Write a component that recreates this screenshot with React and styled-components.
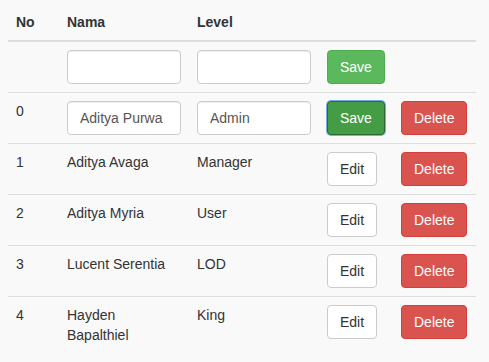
import React from "react";
import styled, { createGlobalStyle, css } from "styled-components";

const Global = createGlobalStyle`
  html, body { margin: 0; padding: 0; background: #f9f9f9; }
  body {
    font-family: "Liberation Sans", Arial, Helvetica, sans-serif;
    font-size: 14px;
    line-height: 1.42857143;
    color: #333;
  }
  * { box-sizing: border-box; }
`;

const Wrap = styled.div`
  padding: 4px 13px 0 8px;
`;

const Table = styled.table`
  width: 468px;
  table-layout: fixed;
  border-collapse: collapse;
  border-spacing: 0;
`;

const Th = styled.th`
  text-align: left;
  font-weight: bold;
  padding: 8px;
  vertical-align: bottom;
  border-bottom: 2px solid #ddd;
  width: ${(p) => p.$w}px;
`;

const Tr = styled.tr`
  & + & td { border-top: 1px solid #ddd; }
`;

const Td = styled.td`
  padding: 8px;
  vertical-align: top;
`;

const Name = styled.span`
  display: block;
  max-width: 111px;
`;

const Input = styled.input`
  display: block;
  width: 114px;
  height: 34px;
  padding: 6px 12px;
  font: inherit;
  font-size: 14px;
  color: #555;
  background: #fff;
  border: 1px solid #ccc;
  border-radius: 4px;
  box-shadow: inset 0 1px 1px rgba(0, 0, 0, 0.075);
  outline: none;
`;

const variants = {
  success: css`
    color: #fff;
    background: #5cb85c;
    border-color: #4cae4c;
  `,
  successFocus: css`
    color: #fff;
    background: #449d44;
    border-color: #2b6a2b;
    box-shadow: 0 0 0 1px rgba(102, 160, 233, 0.85);
  `,
  danger: css`
    color: #fff;
    background: #d9534f;
    border-color: #d43f3a;
  `,
  default: css`
    color: #333;
    background: #fff;
    border-color: #ccc;
  `,
};

const Button = styled.button`
  display: inline-block;
  height: 34px;
  padding: 6px 12px;
  font: inherit;
  font-size: 14px;
  line-height: 1.42857143;
  border: 1px solid transparent;
  border-radius: 4px;
  cursor: pointer;
  ${(p) => variants[p.$variant]}
`;

const rows = [
  { no: 1, nama: "Aditya Avaga", level: "Manager" },
  { no: 2, nama: "Aditya Myria", level: "User" },
  { no: 3, nama: "Lucent Serentia", level: "LOD" },
  { no: 4, nama: "Hayden Bapalthiel", level: "King" },
];

export default function App() {
  return (
    <>
      <Global />
      <Wrap>
        <Table>
          <thead>
            <tr>
              <Th $w={51}>No</Th>
              <Th $w={130}>Nama</Th>
              <Th $w={130}>Level</Th>
              <Th $w={74}></Th>
              <Th $w={83}></Th>
            </tr>
          </thead>
          <tbody>
            <Tr>
              <Td></Td>
              <Td><Input defaultValue="" /></Td>
              <Td><Input defaultValue="" /></Td>
              <Td><Button $variant="success">Save</Button></Td>
              <Td></Td>
            </Tr>
            <Tr>
              <Td>0</Td>
              <Td><Input defaultValue="Aditya Purwa" /></Td>
              <Td><Input defaultValue="Admin" /></Td>
              <Td><Button $variant="successFocus">Save</Button></Td>
              <Td><Button $variant="danger">Delete</Button></Td>
            </Tr>
            {rows.map((r) => (
              <Tr key={r.no}>
                <Td>{r.no}</Td>
                <Td><Name>{r.nama}</Name></Td>
                <Td>{r.level}</Td>
                <Td><Button $variant="default">Edit</Button></Td>
                <Td><Button $variant="danger">Delete</Button></Td>
              </Tr>
            ))}
          </tbody>
        </Table>
      </Wrap>
    </>
  );
}
